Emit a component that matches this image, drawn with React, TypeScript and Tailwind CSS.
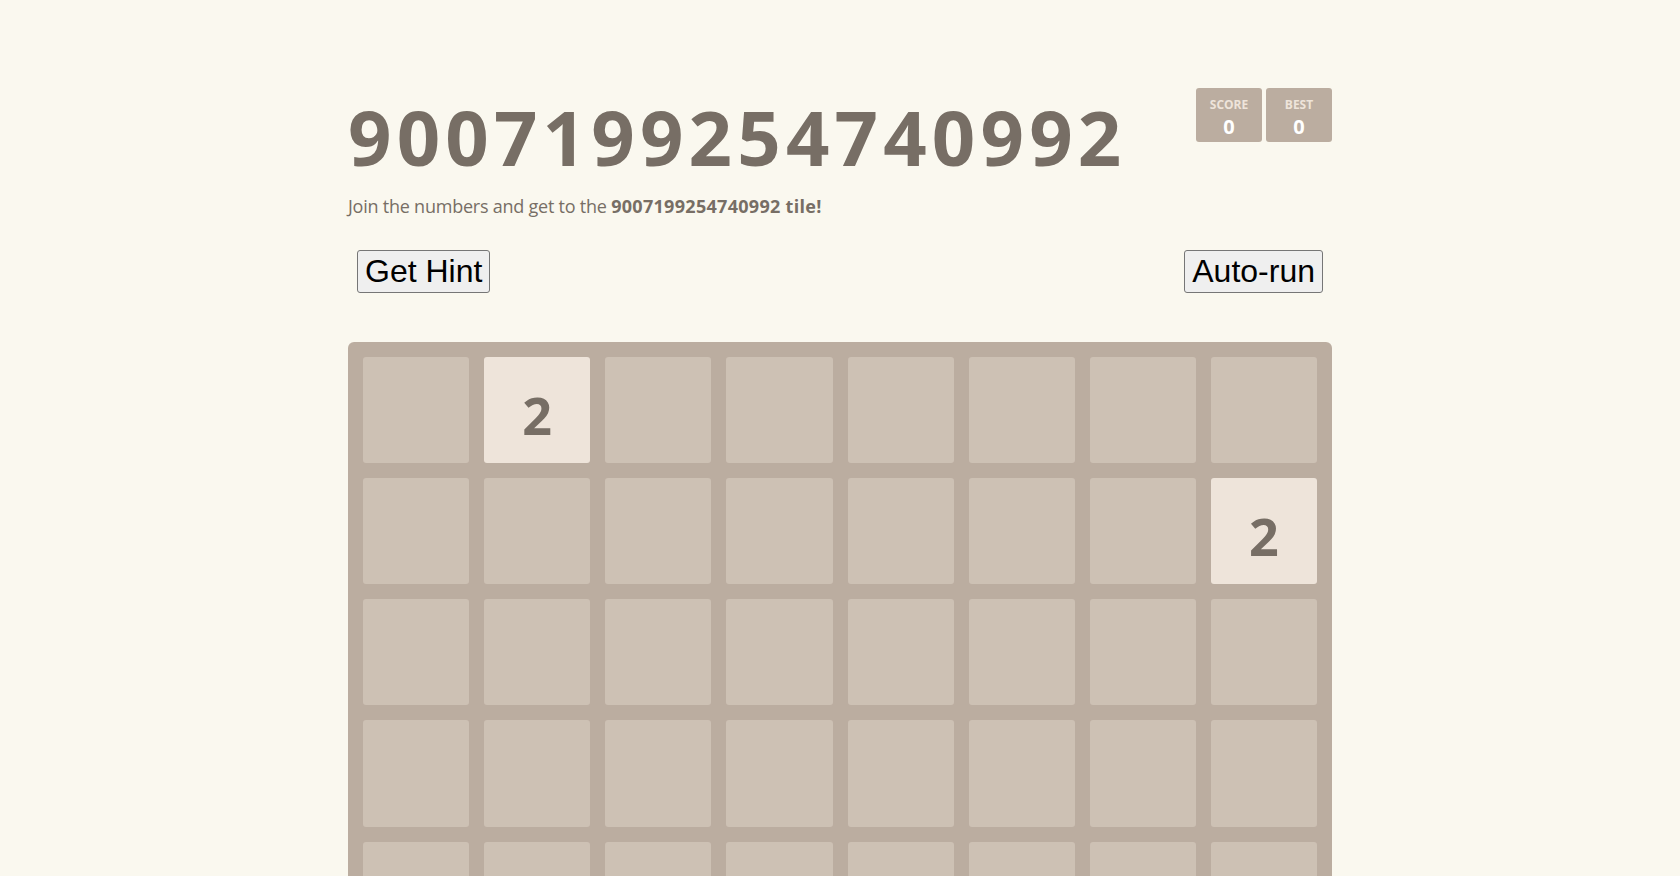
import React from "react";

const SIZE = 8;
const tiles: Record<string, number> = { "0-1": 2, "1-7": 2 };

function ScoreBox({ label, value }: { label: string; value: number }) {
  return (
    <div className="w-[66px] h-[54px] rounded-[3px] bg-[#bbada0] flex flex-col items-center pt-[10px]">
      <div className="text-[12px] leading-[13px] font-bold text-[#eee4da]">{label}</div>
      <div className="mt-[5px] text-[20px] leading-[21px] font-bold text-white">{value}</div>
    </div>
  );
}

export default function App() {
  const cells = [];
  for (let r = 0; r < SIZE; r++) {
    for (let c = 0; c < SIZE; c++) {
      const v = tiles[`${r}-${c}`];
      cells.push(
        v ? (
          <div
            key={`${r}-${c}`}
            className="aspect-square rounded-[3px] bg-[#eee4da] flex items-center justify-center pt-[10px] text-[52px] leading-none font-bold text-[#776e65]"
          >
            {v}
          </div>
        ) : (
          <div key={`${r}-${c}`} className="aspect-square rounded-[3px] bg-[#cdc1b4]" />
        )
      );
    }
  }
  return (
    <div
      className="min-h-screen bg-[#faf8ef] text-[#776e65] pt-[88px]"
      style={{ fontFamily: '"Open Sans", "Noto Sans", sans-serif' }}
    >
      <div className="w-[984px] mx-auto">
        <div className="flex justify-between items-start">
          <h1 className="mt-[11px] text-[76px] leading-[76px] font-bold tracking-[5.2px]">9007199254740992</h1>
          <div className="flex gap-[4px]">
            <ScoreBox label="SCORE" value={0} />
            <ScoreBox label="BEST" value={0} />
          </div>
        </div>
        <p className="mt-[16px] text-[18px] leading-[30px] tracking-[-0.23px]">
          Join the numbers and get to the{" "}
          <strong className="font-bold tracking-[0.3px]">9007199254740992 tile!</strong>
        </p>
        <div className="mt-[29px] flex justify-between pl-[9px] pr-[9px]">
          <button
            className="h-[43px] px-[7px] border border-[#767676] rounded-[3px] bg-[#efefef] text-black text-[32px] leading-[37px]"
            style={{ fontFamily: '"Liberation Sans", Arial, sans-serif' }}
          >
            Get Hint
          </button>
          <button
            className="h-[43px] px-[7px] border border-[#767676] rounded-[3px] bg-[#efefef] text-black text-[32px] leading-[37px]"
            style={{ fontFamily: '"Liberation Sans", Arial, sans-serif' }}
          >
            Auto-run
          </button>
        </div>
        <div className="mt-[49px] rounded-[6px] bg-[#bbada0] p-[15px] grid grid-cols-8 gap-[15px]">
          {cells}
        </div>
      </div>
    </div>
  );
}
